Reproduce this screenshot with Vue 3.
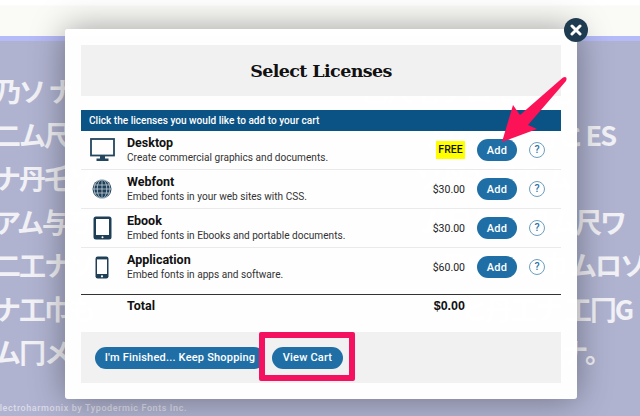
<template>
  <div class="page">
    <div class="top"></div>
    <div class="stripe"></div>
    <div class="poster">
      <div v-for="(line, i) in poster" :key="i" class="line" :style="{ marginRight: line.end + 'px' }">
        <span>{{ line.left }}</span>
        <span>{{ line.right }}</span>
      </div>
    </div>
    <div class="credit">Electroharmonix by Typodermic Fonts Inc.</div>

    <div class="modal">
      <div class="head"><h1>Select Licenses</h1></div>
      <div class="bar">Click the licenses you would like to add to your cart</div>

      <div v-for="item in licenses" :key="item.name" class="row">
        <div class="icon">
          <svg v-if="item.name === 'Desktop'" width="25" height="24" viewBox="0 0 25 24">
            <rect x="1" y="1" width="23" height="16.5" fill="none" stroke="#24465e" stroke-width="1.8" />
            <path d="M10 18h5v2.5h3.5V23H6.500v-2.500h3.500z" fill="#24465e" />
          </svg>
          <svg v-else-if="item.name === 'Webfont'" width="20" height="20" viewBox="0 0 20 20">
            <circle cx="10" cy="10" r="9.500" fill="#1f3f57" />
            <g fill="none" stroke="#c3d0da" stroke-width=".8">
              <path d="M1.500 6h17M.5 10h19M1.500 14h17M10 .5v19" />
              <ellipse cx="10" cy="10" rx="4.800" ry="9.500" />
              <ellipse cx="10" cy="10" rx="8" ry="9.500" />
            </g>
          </svg>
          <svg v-else-if="item.name === 'Ebook'" width="19" height="24" viewBox="0 0 19 24">
            <rect x="0.5" y="0.5" width="18" height="23" rx="2.500" fill="#1f3f57" />
            <rect x="3" y="3" width="13" height="16" fill="#fff" />
            <circle cx="9.500" cy="21.200" r="1" fill="#fff" />
          </svg>
          <svg v-else width="14" height="23" viewBox="0 0 14 23">
            <rect x="0.5" y="0.5" width="13" height="22" rx="2.200" fill="#1f3f57" />
            <rect x="2" y="3.400" width="10" height="14.600" fill="#fff" />
            <circle cx="7" cy="20.300" r="1.100" fill="#fff" />
          </svg>
        </div>
        <div class="info">
          <div class="name">{{ item.name }}</div>
          <div class="desc">{{ item.desc }}</div>
        </div>
        <div :class="['price', { free: item.price === 'FREE' }]">{{ item.price }}</div>
        <button class="btn add">Add</button>
        <div class="help">?</div>
      </div>

      <div class="total">
        <span class="total-label">Total</span>
        <span class="total-sum">$0.00</span>
      </div>

      <div class="foot">
        <button class="btn finish">I'm Finished... Keep Shopping</button>
        <button class="btn cart">View Cart</button>
      </div>
    </div>

    <div class="close">
      <svg width="12" height="12" viewBox="0 0 12 12">
        <path d="M2 2l8 8M10 2l-8 8" stroke="#fff" stroke-width="3" stroke-linecap="round" />
      </svg>
    </div>
    <div class="callout"></div>
    <svg class="arrow" width="80" height="80" viewBox="0 0 80 80">
      <path d="M76 3 Q78.500 3.500 77 7 L39 51 L48 55 L13 68 L24 31 L31 41 L74 3.500z" fill="#fb1257" />
    </svg>
  </div>
</template>

<script setup>
const poster = [
  { left: '乃ソ ナ', right: '巳尺乇 ナロ ヒ巾乇', end: 70 },
  { left: '二ム尺', right: '乃ム尺 ナ丹ヒ ES', end: 25 },
  { left: 'ナ丹乇ソ', right: 'ソ丹乇尺乇 ム', end: 70 },
  { left: 'アム与ㄎ', right: 'ム尺与ロ 丹ム尺ワ', end: 15 },
  { left: '二工ナソ', right: '丹ロ工ナ巾 ムロソ', end: -5 },
  { left: 'ナ工巾も', right: 'ヒ丹工ナ 工冂G', end: 8 },
  { left: 'ム冂メ', right: 'ナロ ヒ丹乇 尺ロ与丹ナ。', end: 30 },
]

const licenses = [
  { name: 'Desktop', desc: 'Create commercial graphics and documents.', price: 'FREE' },
  { name: 'Webfont', desc: 'Embed fonts in your web sites with CSS.', price: '$30.00' },
  { name: 'Ebook', desc: 'Embed fonts in Ebooks and portable documents.', price: '$30.00' },
  { name: 'Application', desc: 'Embed fonts in apps and software.', price: '$60.00' },
]
</script>

<style>
body {
  margin: 0;
}
</style>

<style scoped>
.page {
  position: relative;
  width: 640px;
  height: 416px;
  overflow: hidden;
  background: #b0b3d0;
  font-family: Roboto, "Noto Sans", sans-serif;
}
.top {
  height: 36px;
  background: linear-gradient(#fff 0, #fff 5px, #fafaf7 6px);
}
.stripe {
  height: 5px;
  background: #b5baf8;
}
.poster {
  padding-top: 28px;
  font-family: "Noto Sans CJK JP", sans-serif;
  font-size: 27px;
  font-weight: 700;
  letter-spacing: -2px;
  line-height: 43.5px;
  color: #f1f1f6;
}
.line {
  display: flex;
  justify-content: space-between;
  white-space: nowrap;
  margin-left: -6px;
}
.credit {
  position: absolute;
  left: -6px;
  bottom: 3px;
  font-size: 9px;
  font-weight: 500;
  letter-spacing: 0.6px;
  color: #dcdce8;
}
.modal {
  position: absolute;
  left: 65px;
  top: 29px;
  width: 512px;
  height: 370px;
  box-sizing: border-box;
  padding: 16px;
  background: rgba(255, 255, 255, 0.98);
  border-radius: 3px;
  box-shadow: 0 0 34px rgba(0, 0, 0, 0.38);
  color: #1a1a1a;
}
.head {
  height: 51px;
  margin-bottom: 14px;
  display: flex;
  align-items: center;
  justify-content: center;
  background: rgba(240, 240, 240, 0.9);
}
h1 {
  margin: 0;
  font-family: "DejaVu Serif", serif;
  font-size: 17.5px;
  font-weight: 700;
  letter-spacing: -0.6px;
  color: #111;
}
.bar {
  height: 21px;
  line-height: 21px;
  padding-left: 8px;
  background: #0b5285;
  color: #fff;
  font-size: 10.1px;
  font-weight: 500;
}
.row {
  height: 39px;
  box-sizing: border-box;
  display: flex;
  align-items: center;
  border-bottom: 1px solid #eaeaea;
}
.row:nth-of-type(6) {
  height: 47px;
  padding-bottom: 8px;
  border-bottom: 1.5px solid #333;
}
.icon {
  width: 46px;
  display: flex;
  justify-content: center;
  padding-right: 4px;
  box-sizing: border-box;
}
.info {
  flex: 1;
}
.name {
  font-size: 12.5px;
  line-height: 15px;
  font-weight: 700;
  color: #111;
}
.desc {
  font-size: 10.1px;
  line-height: 15px;
  color: #333;
}
.price {
  font-size: 10.5px;
  color: #222;
}
.free {
  width: 29px;
  height: 18px;
  line-height: 18px;
  text-align: center;
  background: #ffff00;
  font-weight: 500;
  color: #111;
}
.btn {
  border: none;
  padding: 0;
  height: 22px;
  border-radius: 11px;
  background: #1f6fa6;
  color: #fff;
  font-family: inherit;
  font-size: 11px;
  font-weight: 500;
  letter-spacing: 0.2px;
}
.add {
  width: 40px;
  margin-left: 12px;
}
.help {
  width: 16px;
  height: 16px;
  box-sizing: border-box;
  margin: 0 16px 0 12px;
  border: 1px solid #6d9fc2;
  border-radius: 50%;
  text-align: center;
  font-size: 10.5px;
  font-weight: 500;
  line-height: 14px;
  color: #2a72a8;
}
.total {
  display: flex;
  justify-content: space-between;
  height: 37px;
  padding: 3px 96px 0 46px;
  box-sizing: border-box;
  font-size: 12.5px;
  line-height: 16px;
  font-weight: 700;
  color: #111;
}
.total-sum {
  font-family: "Liberation Sans", sans-serif;
  font-size: 12.5px;
}
.foot {
  height: 51px;
  display: flex;
  align-items: center;
  gap: 7px;
  padding-left: 14px;
  background: rgba(240, 240, 240, 0.9);
}
.finish {
  width: 170px;
}
.cart {
  width: 71px;
}
.close {
  position: absolute;
  left: 564px;
  top: 18px;
  width: 24px;
  height: 24px;
  display: flex;
  align-items: center;
  justify-content: center;
  border-radius: 50%;
  background: #1f3b50;
}
.callout {
  position: absolute;
  left: 259px;
  top: 332px;
  width: 96px;
  height: 49px;
  box-sizing: border-box;
  border: 6px solid #f4115f;
  border-radius: 2px;
}
.arrow {
  position: absolute;
  left: 489px;
  top: 74px;
}
</style>
